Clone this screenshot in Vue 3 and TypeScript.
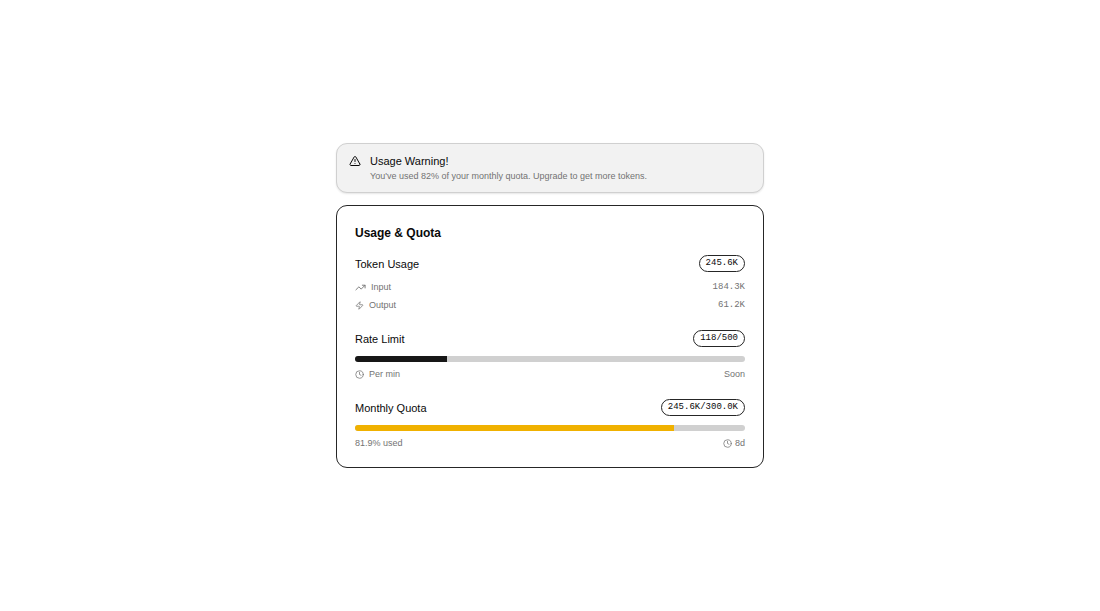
<script setup lang="ts">
interface Meter {
  id: string
  title: string
  badge: string
  percent: number
  tone: string
  left: string
  right: string
  clock: 'left' | 'right'
}

const meters: Meter[] = [
  { id: 'rate', title: 'Rate Limit', badge: '118/500', percent: 23.6, tone: 'dark', left: 'Per min', right: 'Soon', clock: 'left' },
  { id: 'quota', title: 'Monthly Quota', badge: '245.6K/300.0K', percent: 81.9, tone: 'amber', left: '81.9% used', right: '8d', clock: 'right' },
]
</script>

<template>
  <main class="page">
    <div class="stack">
      <section class="alert" role="alert">
        <svg class="alert-icon" viewBox="0 0 24 24" aria-hidden="true">
          <path d="m21.73 18-8-14a2 2 0 0 0-3.48 0l-8 14A2 2 0 0 0 4 21h16a2 2 0 0 0 1.73-3" />
          <path d="M12 9v4M12 17h.01" />
        </svg>
        <div>
          <h2 class="alert-title">Usage Warning!</h2>
          <p class="alert-text">You've used 82% of your monthly quota. Upgrade to get more tokens.</p>
        </div>
      </section>

      <section class="card">
        <h1 class="card-title">Usage &amp; Quota</h1>

        <div class="group">
          <div class="row">
            <h3 class="label">Token Usage</h3>
            <span class="badge">245.6K</span>
          </div>
          <div class="row detail first">
            <span class="with-icon wide">
              <svg class="icon trend" viewBox="0 0 24 24" aria-hidden="true">
                <path d="M16 7h6v6" />
                <path d="m22 7-8.500 8.500-5-5L2 17" />
              </svg>
              Input
            </span>
            <span class="mono">184.3K</span>
          </div>
          <div class="row detail">
            <span class="with-icon wide">
              <svg class="icon" viewBox="0 0 24 24" aria-hidden="true">
                <path d="M4 14a1 1 0 0 1-.78-1.630l9.900-10.200a.5.5 0 0 1 .86.46l-1.920 6.020A1 1 0 0 0 13 10h7a1 1 0 0 1 .78 1.630l-9.900 10.200a.5.5 0 0 1-.86-.46l1.920-6.020A1 1 0 0 0 11 14z" />
              </svg>
              Output
            </span>
            <span class="mono">61.2K</span>
          </div>
        </div>

        <div v-for="m in meters" :key="m.id" class="group">
          <div class="row">
            <h3 class="label">{{ m.title }}</h3>
            <span class="badge">{{ m.badge }}</span>
          </div>
          <div class="track" role="progressbar" :aria-label="m.title" :aria-valuenow="m.percent" aria-valuemin="0" aria-valuemax="100">
            <div class="fill" :class="m.tone" :style="{ width: m.percent + '%' }"></div>
          </div>
          <div class="row foot">
            <span class="with-icon wide">
              <svg v-if="m.clock === 'left'" class="icon" viewBox="0 0 24 24" aria-hidden="true">
                <circle cx="12" cy="12" r="10" />
                <path d="M12 6v6l4 2" />
              </svg>
              {{ m.left }}
            </span>
            <span class="with-icon">
              <svg v-if="m.clock === 'right'" class="icon" viewBox="0 0 24 24" aria-hidden="true">
                <circle cx="12" cy="12" r="10" />
                <path d="M12 6v6l4 2" />
              </svg>
              {{ m.right }}
            </span>
          </div>
        </div>
      </section>
    </div>
  </main>
</template>

<style>
body {
  background: #fff;
}
</style>

<style scoped>
* {
  box-sizing: border-box;
}

.page {
  min-height: 100vh;
  display: flex;
  align-items: center;
  justify-content: center;
  padding: 16px;
  font-family: "Liberation Sans", Arial, sans-serif;
  color: #0a0a0a;
}

.stack {
  width: 100%;
  max-width: 428px;
  display: flex;
  flex-direction: column;
  gap: 12px;
}

h1,
h2,
h3,
p {
  margin: 0;
  font-weight: 400;
}

svg {
  fill: none;
  stroke: currentColor;
  stroke-width: 2;
  stroke-linecap: round;
  stroke-linejoin: round;
  flex: none;
}

.alert {
  display: flex;
  gap: 9px;
  padding: 9px 12px;
  border: 1px solid #d0d0d0;
  border-radius: 11px;
  background: #f2f2f2;
  box-shadow: 0 1px 2px rgba(0, 0, 0, 0.1);
}

.alert-icon {
  width: 12px;
  height: 12px;
  margin-top: 2px;
}

.alert-title {
  font-size: 11px;
  line-height: 16px;
}

.alert-text {
  font-size: 9px;
  line-height: 14px;
  color: #737373;
}

.card {
  display: flex;
  flex-direction: column;
  gap: 19px;
  padding: 18px;
  border: 1px solid #262626;
  border-radius: 11px;
}

.card-title {
  font-size: 12px;
  line-height: 18px;
  font-weight: 700;
  margin-bottom: -6px;
}

.row {
  display: flex;
  align-items: center;
  justify-content: space-between;
}

.label {
  font-size: 11px;
  line-height: 16px;
}

.badge {
  padding: 0 6px;
  border: 1px solid #262626;
  border-radius: 9px;
  font-family: "Liberation Mono", monospace;
  font-size: 9px;
  line-height: 15px;
}

.detail,
.foot {
  font-size: 9px;
  line-height: 12px;
  color: #737373;
}

.detail {
  margin-top: 6px;
}

.detail.first {
  margin-top: 9px;
}

.mono {
  font-family: "Liberation Mono", monospace;
}

.with-icon {
  display: flex;
  align-items: center;
  gap: 3px;
}

.with-icon.wide {
  gap: 5px;
}

.icon {
  width: 9px;
  height: 9px;
}

.icon.trend {
  width: 11px;
  height: 11px;
}

.track {
  height: 6px;
  margin-top: 9px;
  border-radius: 3px;
  background: #d0d0d0;
  overflow: hidden;
}

.fill {
  height: 100%;
}

.dark {
  background: #171717;
}

.amber {
  background: #f0b100;
}

.foot {
  margin-top: 6px;
}
</style>
